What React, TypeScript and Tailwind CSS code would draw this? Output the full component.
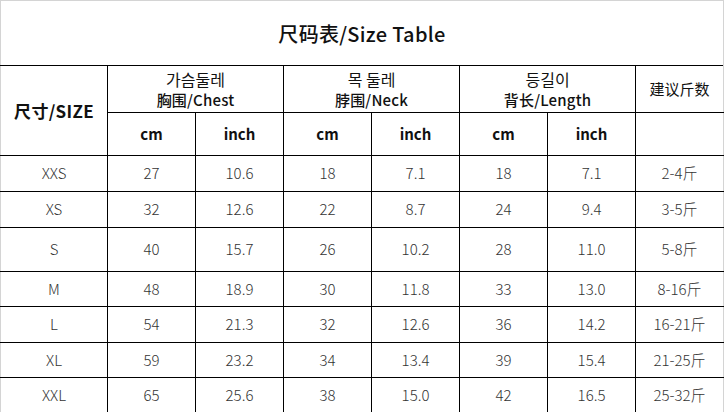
const rows = [
  { size: "XXS", c1: "27", i1: "10.6", c2: "18", i2: "7.1", c3: "18", i3: "7.1", w: "2-4斤", h: "h-[36px]" },
  { size: "XS", c1: "32", i1: "12.6", c2: "22", i2: "8.7", c3: "24", i3: "9.4", w: "3-5斤", h: "h-[36px]" },
  { size: "S", c1: "40", i1: "15.7", c2: "26", i2: "10.2", c3: "28", i3: "11.0", w: "5-8斤", h: "h-[44px]" },
  { size: "M", c1: "48", i1: "18.9", c2: "30", i2: "11.8", c3: "33", i3: "13.0", w: "8-16斤", h: "h-[35px]" },
  { size: "L", c1: "54", i1: "21.3", c2: "32", i2: "12.6", c3: "36", i3: "14.2", w: "16-21斤", h: "h-[36px]" },
  { size: "XL", c1: "59", i1: "23.2", c2: "34", i2: "13.4", c3: "39", i3: "15.4", w: "21-25斤", h: "h-[35px]" },
  { size: "XXL", c1: "65", i1: "25.6", c2: "38", i2: "15.0", c3: "42", i3: "16.5", w: "25-32斤", h: "h-[35px]" },
];

const groups = [
  { ko: "가슴둘레", zh: "胸围/Chest" },
  { ko: "목 둘레", zh: "脖围/Neck" },
  { ko: "등길이", zh: "背长/Length" },
];

const cell = "border border-black text-center align-middle p-0";

export default function App() {
  return (
    <div
      className="w-[724px] h-[412px] overflow-hidden bg-white text-[#111]"
      style={{ fontFamily: '"Noto Sans CJK SC", "Noto Sans CJK KR", sans-serif' }}
    >
      <div className="h-[65px] border-t border-x border-[#d4d4d4] flex items-center justify-center">
        <h1 className="text-[20px] font-medium tracking-[0.3px] pt-[2px]">尺码表/Size Table</h1>
      </div>
      <table className="w-[724px] border-collapse table-fixed">
        <colgroup>
          <col className="w-[107px]" />
          <col className="w-[88px]" />
          <col className="w-[88px]" />
          <col className="w-[88px]" />
          <col className="w-[88px]" />
          <col className="w-[88px]" />
          <col className="w-[88px]" />
          <col />
        </colgroup>
        <thead>
          <tr className="h-[47px]">
            <th rowSpan={2} className={`${cell} border-l-[#d4d4d4] text-[17px] font-semibold tracking-[0.3px]`}>
              尺寸/SIZE
            </th>
            {groups.map((g) => (
              <th key={g.zh} colSpan={2} className={cell}>
                <div className="flex flex-col items-center">
                  <span className="text-[16px] font-normal leading-[21px]">{g.ko}</span>
                  <span className="text-[15px] font-medium leading-[20px] tracking-[0.2px]">{g.zh}</span>
                </div>
              </th>
            ))}
            <th className={`${cell} border-r-[#d4d4d4] text-[15px] font-normal`}>建议斤数</th>
          </tr>
          <tr className="h-[43px]">
            {["cm", "inch", "cm", "inch", "cm", "inch"].map((u, i) => (
              <th key={i} className={`${cell} text-[15px] font-semibold`}>
                {u}
              </th>
            ))}
            <th className={`${cell} border-r-[#d4d4d4]`} />
          </tr>
        </thead>
        <tbody className="text-[15px] font-light text-[#333]">
          {rows.map((r) => (
            <tr key={r.size} className={r.h}>
              <td className={`${cell} border-l-[#d4d4d4]`}>{r.size}</td>
              <td className={cell}>{r.c1}</td>
              <td className={cell}>{r.i1}</td>
              <td className={cell}>{r.c2}</td>
              <td className={cell}>{r.i2}</td>
              <td className={cell}>{r.c3}</td>
              <td className={cell}>{r.i3}</td>
              <td className={`${cell} border-r-[#d4d4d4]`}>{r.w}</td>
            </tr>
          ))}
        </tbody>
      </table>
    </div>
  );
}
